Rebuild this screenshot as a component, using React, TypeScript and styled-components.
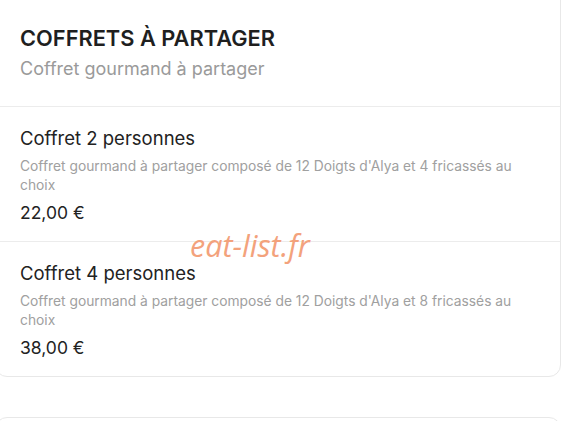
import React from "react";
import styled, { createGlobalStyle } from "styled-components";

const Global = createGlobalStyle`
  html, body { margin: 0; padding: 0; background: #ffffff; overflow: hidden; }
  body { font-family: Inter, "Noto Sans", sans-serif; -webkit-font-smoothing: antialiased; }
  * { box-sizing: border-box; }
`;

const Page = styled.div`
  position: relative;
  display: flex;
  flex-direction: column;
  gap: 40px;
  margin: -12px 7px 0 -5px;
`;

const Card = styled.section<{ $stub?: boolean }>`
  background: #fff;
  border: 1px solid #e8e8e8;
  border-radius: 12px;
  display: flex;
  flex-direction: column;
  min-height: ${(p) => (p.$stub ? "80px" : "0")};
`;

const Header = styled.header`
  padding: 34px 24px 24px;
  border-bottom: 1px solid #ececec;
`;

const Heading = styled.h2`
  margin: 0;
  font-size: 21.8px;
  line-height: 30px;
  font-weight: 600;
  color: #1f1f1f;
`;

const Sub = styled.p`
  margin: 3px 0 0;
  font-size: 18px;
  line-height: 26px;
  color: #9a9a9a;
`;

const Item = styled.article<{ $last?: boolean }>`
  padding: 17px 24px 15px;
  border-bottom: ${(p) => (p.$last ? "none" : "1px solid #ececec")};
`;

const ItemTitle = styled.h3`
  margin: 0;
  font-size: 18.5px;
  line-height: 28px;
  font-weight: 400;
  color: #222;
`;

const Desc = styled.p`
  margin: 5px 0 0;
  font-size: 13.8px;
  line-height: 19px;
  color: #a0a0a0;
  max-width: 520px;
`;

const Price = styled.div`
  margin-top: 5px;
  font-size: 17.5px;
  line-height: 26px;
  color: #222;
`;

const Watermark = styled.div`
  position: absolute;
  left: 195px;
  top: 236px;
  font-family: "Open Sans", sans-serif;
  font-style: italic;
  font-size: 30.5px;
  color: #f3a27c;
  pointer-events: none;
`;

const items = [
  {
    title: "Coffret 2 personnes",
    desc: "Coffret gourmand à partager composé de 12 Doigts d'Alya et 4 fricassés au choix",
    price: "22,00 €",
  },
  {
    title: "Coffret 4 personnes",
    desc: "Coffret gourmand à partager composé de 12 Doigts d'Alya et 8 fricassés au choix",
    price: "38,00 €",
  },
];

export default function App() {
  return (
    <>
      <Global />
      <Page>
        <Card>
          <Header>
            <Heading>COFFRETS À PARTAGER</Heading>
            <Sub>Coffret gourmand à partager</Sub>
          </Header>
          {items.map((it, i) => (
            <Item key={it.title} $last={i === items.length - 1}>
              <ItemTitle>{it.title}</ItemTitle>
              <Desc>{it.desc}</Desc>
              <Price>{it.price}</Price>
            </Item>
          ))}
        </Card>
        <Card $stub />
        <Watermark>eat-list.fr</Watermark>
      </Page>
    </>
  );
}
